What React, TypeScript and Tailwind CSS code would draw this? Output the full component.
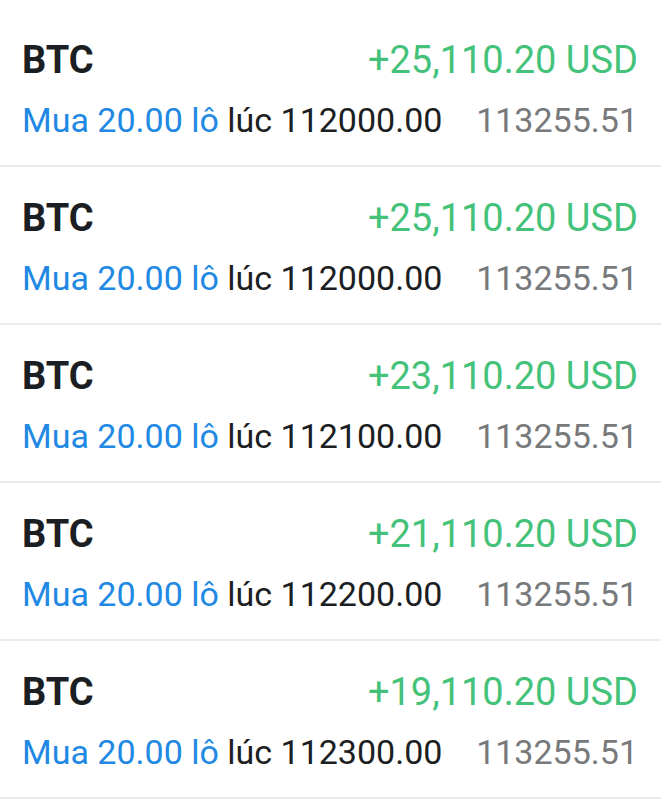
import React from "react";

const rows = [
  { pnl: "+25,110.20 USD", open: "112000.00" },
  { pnl: "+25,110.20 USD", open: "112000.00" },
  { pnl: "+23,110.20 USD", open: "112100.00" },
  { pnl: "+21,110.20 USD", open: "112200.00" },
  { pnl: "+19,110.20 USD", open: "112300.00" },
];

export default function App() {
  return (
    <div className="w-[661px] h-[800px] bg-white pt-[9px] overflow-hidden" style={{ fontFamily: "Roboto, 'Noto Sans', sans-serif" }}>
      {rows.map((r, i) => (
        <div key={i} className="h-[158px] border-b-2 border-[#ececec] pl-[22px] pr-[23px] pt-[29px] flex flex-col gap-[16px]">
          <div className="flex justify-between items-center leading-[44px]">
            <span className="text-[38px] font-bold text-[#1b1e22]">BTC</span>
            <span className="text-[38px] text-[#45c27a]">{r.pnl}</span>
          </div>
          <div className="flex justify-between items-center leading-[44px] text-[34px]">
            <span>
              <span className="text-[#2189e3]">Mua 20.00 lô</span>
              <span className="text-[#1b1e22]"> lúc {r.open}</span>
            </span>
            <span className="text-[#77797b]">113255.51</span>
          </div>
        </div>
      ))}
    </div>
  );
}
